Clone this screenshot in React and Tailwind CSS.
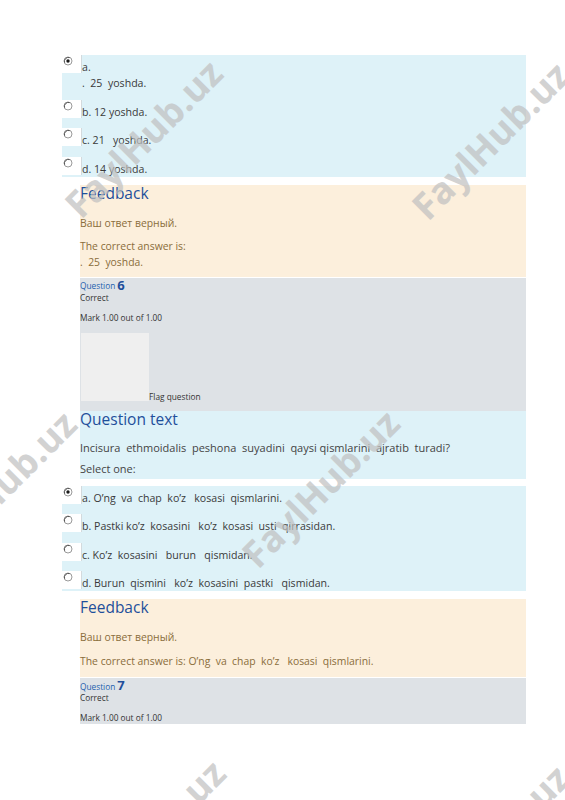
const Radio = ({ checked }) => (
  <svg width="10" height="10" viewBox="0 0 10 10">
    <circle cx="5" cy="5" r="4" fill="#fff" stroke="#9a9a9a" strokeWidth="1" />
    <path d="M1.6 6.6 A4 4 0 0 1 6.6 1.6" fill="none" stroke="#555" strokeWidth="1" />
    {checked && <circle cx="5" cy="5" r="1.7" fill="#1a1a1a" />}
  </svg>
);

const Option = ({ checked, lines }) => (
  <div className="flex">
    <div className="w-[20px] h-[18px] bg-white shrink-0 pl-[1px] pt-[1px] border-r border-[#d3dadd]">
      <Radio checked={checked} />
    </div>
    <div className="pt-[4px] leading-[16px] whitespace-pre text-[#3a3a3a]">
      {lines.map((l, i) => (
        <div key={i}>{l}</div>
      ))}
    </div>
  </div>
);

const Answers = ({ items }) => (
  <div className="ml-[62px] w-[464px] bg-[#def2f8] flex flex-col gap-[8.5px] text-[10.6px]">
    {items.map((it, i) => (
      <Option key={i} checked={it.checked} lines={it.lines} />
    ))}
  </div>
);

const Feedback = ({ children, last }) => (
  <div className="ml-[80px] w-[446px] bg-[#fcefdc] text-[#8a6d3b] text-[10.4px]">
    <div className="text-[15.5px] leading-[16px] text-[#1f4f9b]">Feedback</div>
    <div className="mt-[14px] leading-[16px]">Ваш ответ верный.</div>
    <div className={last ? "mt-[8px] leading-[16px] whitespace-pre pb-[8px]" : "mt-[7px] leading-[16px] whitespace-pre pb-[7px]"}>
      {children}
    </div>
  </div>
);

const Info = ({ num, flag }) => (
  <div className="ml-[80px] w-[446px] bg-[#dee2e6] text-[#333] text-[8.3px] mt-[1px]">
    <div className="h-[14px] flex items-end text-[#1f5fae] leading-none pb-[1px]">
      <span>Question</span>
      <span className="text-[13px] font-bold text-[#1f4f9b] ml-[2px] leading-none mb-[-1px]">{num}</span>
    </div>
    <div className="leading-[12px]">Correct</div>
    <div className="leading-[12px] mt-[8px]">Mark 1.00 out of 1.00</div>
    {flag && (
      <div className="flex items-end mt-[9px] pb-[10px]">
        <div className="w-[68px] h-[68px] bg-[#efefef] ml-[1px]" />
        <span className="leading-[10px] mb-[-1px]">Flag question</span>
      </div>
    )}
  </div>
);

const Mark = ({ x, y }) => (
  <div
    className="absolute pointer-events-none select-none text-[37px] font-bold text-[#c0c0c0] opacity-70 whitespace-nowrap"
    style={{ left: x, top: y, transform: "translate(-50%, -50%) rotate(-45deg)" }}
  >
    FaylHub.uz
  </div>
);

export default function App() {
  return (
    <div
      className="relative w-[565px] h-[800px] bg-white overflow-hidden"
      style={{ fontFamily: '"Open Sans", "Noto Sans", sans-serif' }}
    >
      <div className="pt-[55px]">
        <Answers
          items={[
            { checked: true, lines: ["a.", ".  25  yoshda."] },
            { lines: ["b. 12 yoshda."] },
            { lines: ["c. 21   yoshda."] },
            { lines: ["d. 14 yoshda."] },
          ]}
        />
        <div className="h-[8px]" />
        <Feedback>
          <div>The correct answer is:</div>
          <div>.  25  yoshda.</div>
        </Feedback>
        <Info num="6" flag />
        <div className="ml-[80px] w-[446px] bg-[#def2f8] text-[11px] text-[#444]">
          <div className="text-[15.5px] leading-[16px] text-[#1f4f9b]">Question text</div>
          <div className="mt-[13px] leading-[16px] whitespace-pre">
            Incisura  ethmoidalis  peshona  suyadini  qaysi qismlarini  ajratib  turadi?
          </div>
          <div className="mt-[5px] leading-[16px] pb-[2px]">Select one:</div>
        </div>
        <div className="h-[7px]" />
        <Answers
          items={[
            { checked: true, lines: ["a. O’ng  va  chap  ko’z   kosasi  qismlarini."] },
            { lines: ["b. Pastki ko’z  kosasini   ko’z  kosasi  usti  qirrasidan."] },
            { lines: ["c. Ko’z  kosasini   burun   qismidan."] },
            { lines: ["d. Burun  qismini   ko’z  kosasini  pastki   qismidan."] },
          ]}
        />
        <div className="h-[8px]" />
        <Feedback last>
          <div>The correct answer is: O’ng  va  chap  ko’z   kosasi  qismlarini.</div>
        </Feedback>
        <Info num="7" />
      </div>
      <Mark x={143} y={138} />
      <Mark x={490} y={140} />
      <Mark x={-3} y={489} />
      <Mark x={320} y={488} />
      <Mark x={146} y={838} />
      <Mark x={490} y={843} />
    </div>
  );
}
